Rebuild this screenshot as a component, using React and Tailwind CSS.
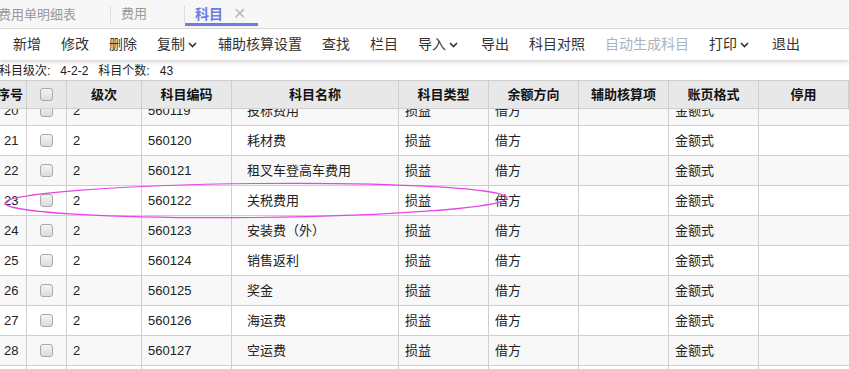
import React from "react";

const FONT = { fontFamily: '"Liberation Sans", "Noto Sans CJK SC", sans-serif' };

const tools = [
  { label: "新增" },
  { label: "修改" },
  { label: "删除" },
  { label: "复制", caret: true, tight: true },
  { label: "辅助核算设置" },
  { label: "查找" },
  { label: "栏目" },
  { label: "导入", caret: true },
  { label: "导出" },
  { label: "科目对照" },
  { label: "自动生成科目", disabled: true },
  { label: "打印", caret: true },
  { label: "退出" },
];

const rows = [
  [20, "560119", "投标费用"],
  [21, "560120", "耗材费"],
  [22, "560121", "租叉车登高车费用"],
  [23, "560122", "关税费用"],
  [24, "560123", "安装费（外）"],
  [25, "560124", "销售返利"],
  [26, "560125", "奖金"],
  [27, "560126", "海运费"],
  [28, "560127", "空运费"],
  [29, "560128", "其他费用"],
];

const cols = "grid grid-cols-[27px_40px_75px_90px_167px_90px_90px_90px_90px_90px]";

function Caret({ tight }) {
  return (
    <svg width="9" height="6" viewBox="0 0 9 6" className={tight ? "ml-[3px] mr-[1px]" : "ml-[3px] mr-[3px]"}>
      <path d="M1 1l3.5 3.5L8 1" fill="none" stroke="#333" strokeWidth="1.6" />
    </svg>
  );
}

function Check() {
  return (
    <span className="block w-[13px] h-[13px] rounded-[3px] border border-[#a9a9a9] bg-gradient-to-b from-[#f4f4f4] to-[#dcdcdc]" />
  );
}

export default function App() {
  return (
    <div className="relative w-[849px] h-[369px] overflow-hidden bg-white text-[#222]" style={FONT}>
      {/* tabs */}
      <div className="h-[29px] bg-[#f7f7f7] border-b border-[#dcdcdc] flex items-center text-[13px]">
        <div className="ml-[-2px] w-[112px] text-[#999] leading-none">费用单明细表</div>
        <span className="w-px h-[17px] bg-[#ddd]" />
        <div className="pl-[10px] w-[73px] text-[#999]">费用</div>
        <span className="w-px h-[17px] bg-[#ddd]" />
        <div className="relative h-full w-[73px] flex items-center pl-[10px] gap-[10px]">
          <span className="text-[14px] font-bold text-[#6b7be0]">科目</span>
          <span className="text-[#bbb] text-[16px] leading-none">✕</span>
          <span className="absolute left-0 right-0 bottom-[2px] h-[3px] bg-[#6c7ee1]" />
        </div>
      </div>

      {/* toolbar */}
      <div className="relative z-10 h-[31px] bg-white shadow-[0_2px_4px_rgba(0,0,0,0.18)] flex items-center pl-[13px] gap-[20px] text-[14px]">
        {tools.map((t) => (
          <div key={t.label} className={"flex items-center " + (t.disabled ? "text-[#aab3c0]" : "text-[#333]")}>
            {t.label}
            {t.caret && <Caret tight={t.tight} />}
          </div>
        ))}
      </div>

      {/* info */}
      <div className="h-[19px] flex items-center text-[12px] ml-[-1px] mt-[1px]">
        <span>科目级次:</span>
        <span className="ml-[10px]">4-2-2</span>
        <span className="ml-[10px]">科目个数:</span>
        <span className="ml-[10px]">43</span>
      </div>

      {/* table */}
      <div className="text-[13px]">
        <div className={cols + " relative z-10 h-[29px] bg-[#e8e8e8] border-y border-[#cfcfcf] font-bold text-[#111]"}>
          {["序号", "", "级次", "科目编码", "科目名称", "科目类型", "余额方向", "辅助核算项", "账页格式", "停用"].map((h, i) => (
            <div key={i} className={"flex items-center justify-center border-r border-[#cfcfcf] " + (i === 0 ? "ml-[-6px]" : "")}>
              {i === 1 ? <Check /> : h}
            </div>
          ))}
        </div>
        <div className="mt-[-13px]">
          {rows.map(([n, code, name]) => (
            <div key={n} className={cols + " h-[30px] border-b border-[#cfcfcf] " + (n % 2 === 0 ? "bg-[#f8f8f8]" : "bg-white")}>
              <div className="flex items-center pl-[4px] border-r border-[#cfcfcf]">{n}</div>
              <div className="flex items-center justify-center border-r border-[#cfcfcf]"><Check /></div>
              <div className="flex items-center pl-[6px] border-r border-[#cfcfcf]">2</div>
              <div className="flex items-center pl-[6px] border-r border-[#cfcfcf]">{code}</div>
              <div className="flex items-center pl-[15px] border-r border-[#cfcfcf]">{name}</div>
              <div className="flex items-center pl-[6px] border-r border-[#cfcfcf]">损益</div>
              <div className="flex items-center pl-[6px] border-r border-[#cfcfcf]">借方</div>
              <div className="border-r border-[#cfcfcf]" />
              <div className="flex items-center pl-[6px] border-r border-[#cfcfcf]">金额式</div>
              <div />
            </div>
          ))}
        </div>
      </div>

      {/* annotation */}
      <svg className="absolute left-0 top-0 z-20 pointer-events-none" width="849" height="369">
        <ellipse cx="256" cy="200.5" rx="251" ry="17" fill="none" stroke="#e845e8" strokeWidth="1.2" transform="rotate(-0.6 256 200.5)" />
      </svg>
    </div>
  );
}
